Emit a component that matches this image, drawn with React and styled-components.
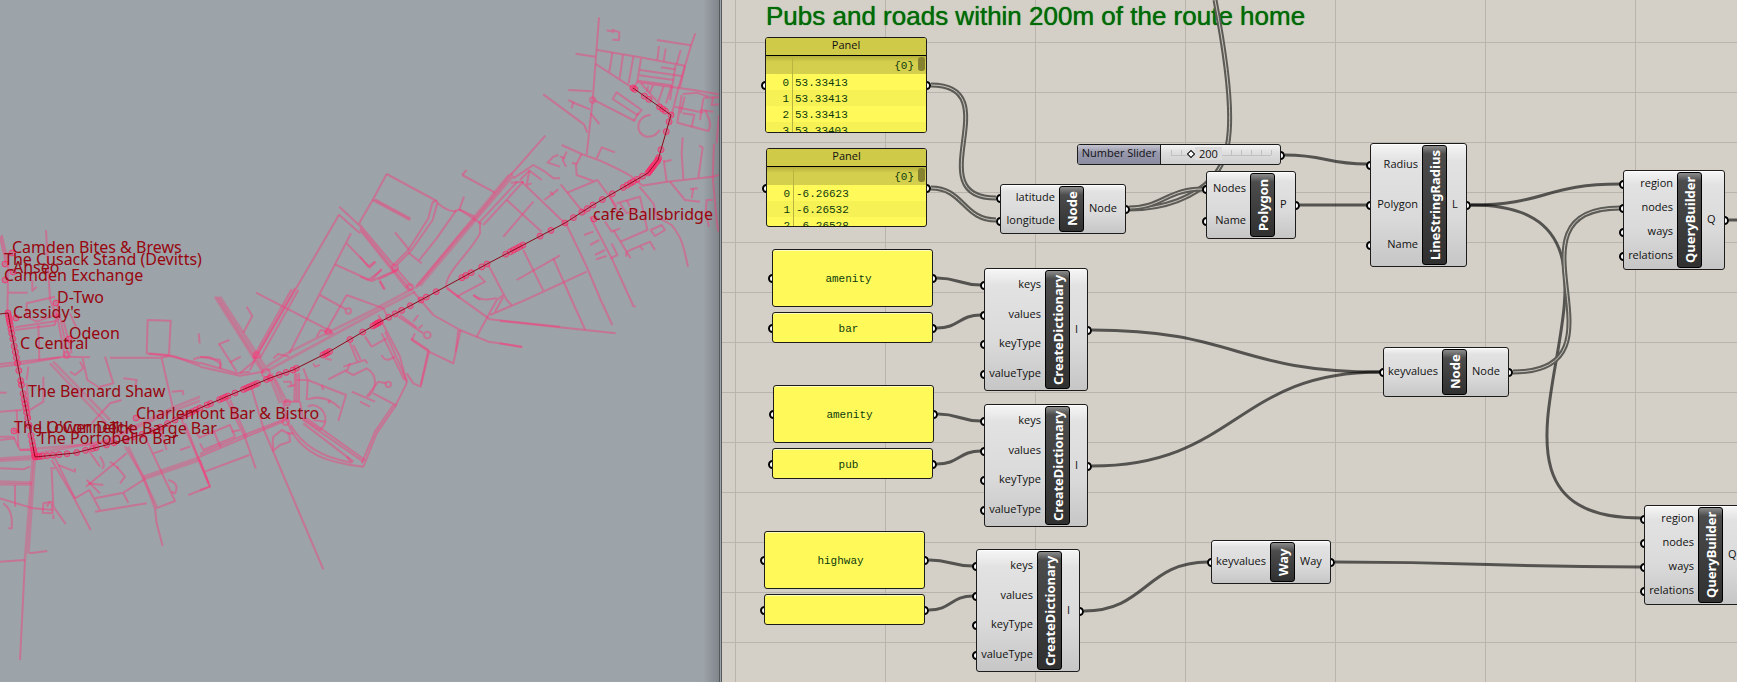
import React from "react";
import styled, { createGlobalStyle } from "styled-components";

const GlobalStyle = createGlobalStyle`
  * { box-sizing: border-box; }
  body { margin: 0; background: #d4d0c8; }
`;

const ui = `"Open Sans", "Noto Sans", sans-serif`;
const label = `"Noto Sans", "Open Sans", sans-serif`;
const mono = `"Liberation Mono", monospace`;

const Workspace = styled.main`
  display: grid;
  grid-template-columns: minmax(0, 722fr) minmax(0, 1015fr);
  min-height: 100vh;
  overflow: hidden;
  font-family: ${ui};
`;

/* ---------- map viewport ---------- */

const MapView = styled.section`
  position: relative;
  overflow: hidden;
  background: linear-gradient(to left, #80868b, #9ca3a9 16px);
  border-right: 3px double #55595c;
`;

const MapDrawing = styled.svg`
  position: absolute;
  top: 0;
  left: 0;
  width: 722px;
  height: 682px;
`;

const Place = styled.span`
  position: absolute;
  left: ${(p) => p.$x}px;
  top: ${(p) => p.$y}px;
  transform: translateY(-50%);
  font-family: ${label};
  font-size: 16px;
  line-height: 20px;
  white-space: nowrap;
  color: #98060f;
`;

const places = [
  ["Camden Bites & Brews", 12, 247],
  ["The Cusack Stand (Devitts)", 4, 259],
  ["Anseo", 13, 267],
  ["Camden Exchange", 4, 275],
  ["D-Two", 57, 297],
  ["Cassidy's", 13, 312],
  ["Odeon", 69, 333],
  ["C Central", 20, 343],
  ["The Bernard Shaw", 28, 391],
  ["Charlemont Bar & Bistro", 136, 413],
  ["The Lower Deck", 14, 427],
  ["J O'Connell", 38, 427],
  ["The Barge Bar", 110, 428],
  ["The Portobello Bar", 38, 438],
  ["café Ballsbridge", 593, 214],
];

/* Each district is traced at three units to the pixel, from its own origin. */
const districts = [
  {
    name: "north-east",
    origin: [360, 0],
    streets: `M717 52L706 195 698 300 680 463M740 91L763 96M755 88L778 97 777 120 757 119M647 161L706 170
      M711 150L840 172 975 197M707 192L820 265M757 158L748 215M789 165L779 235M820 170L806 250M843 175L832 245 822 262
      M891 120L993 136M1006 100L992 140 955 265 935 345M897 138L892 180M917 146L911 183M962 150L950 192
      M840 210L965 228M838 226L940 240M834 242L935 256M903 202L945 208M947 195L930 300M975 197L960 262
      M832 247L1000 270 1077 283M843 250L905 320M865 258L860 275M880 255L868 280M911 258L895 305M935 256L918 310
      M625 270L695 274M550 283L672 373 682 398M625 300L650 312 690 328M640 305L635 325M692 340L718 372
      M698 298L825 363M770 277L845 330 832 345 758 297ZM822 362L835 340M872 345C830 345 820 400 860 410C885 412 890 400 900 390
      M968 282L1010 278 1045 290M965 285L952 368 1045 393C1055 375 1050 360 1035 330M945 320L1030 338M1030 295L1020 360
      M1020 330L1060 335M968 340L1003 345 995 380M1030 293L1077 292M1060 290L1055 315 1077 313M974 290L962 340
      M1077 345L1070 430M605 435L665 462 720 482C760 500 800 520 815 530L845 555M665 462L648 495 650 525 700 543
      M710 475L725 442 765 457M620 455L608 480 618 500M595 465L580 470 563 488 600 500M600 470L615 475M636 488L650 492
      M845 557L922 545 1058 530 1077 525M911 480L920 545M911 485L935 480M968 412L965 460 970 537M1017 437L1028 443 1015 532
      M1062 432L1058 530 1070 660 1075 695M930 545L975 600 1020 605M1000 565L995 595M990 568L1013 565M1058 600L1040 600 1037 640 1047 680
      M838 560L880 610 890 650 935 675C970 720 970 740 984 800M556 407L452 525M307 525L320 510M307 525L405 578
      M312 590L298 628 345 650M298 628L365 672M80 522L38 600M80 522L230 603M38 600L150 660M45 598L152 656M38 600L0 665
      M218 605L205 655 145 750 100 795M233 605L218 660 155 750 110 795M218 605L233 603M233 610Q270 640 290 632
      M300 628L288 632 230 715 178 780M105 697L148 750M145 758L185 790M0 675L155 860M0 690L140 865M0 683L150 868
      M0 770L25 800 45 785M65 810L25 840 0 830M55 838L110 812M60 843L72 868
      M485 545L620 675 680 800 722 900M440 600L545 695M430 710L520 605M460 535L520 495 555 515 580 535 600 535
      M480 540L508 512 545 540M508 512L500 555 515 550M553 600L595 568M570 575L580 585M602 553L622 578 660 625 680 640
      M622 578L712 540 770 620M472 545L355 670M490 545L370 675M452 548L490 545M360 670L360 700C330 760 260 810 258 860L300 895
      M750 590L775 640M735 665L755 695 780 685M770 610L840 590 862 690 782 725M690 650L755 775 812 900
      M672 705L700 695M690 735L718 720M705 765L735 750M708 778L740 768M752 775L772 765 755 730M760 690L800 755 870 725 885 750
      M800 755L812 775M800 755L798 770M840 740L850 750M872 690L905 675 915 690 885 708ZM780 610L800 640 830 630M800 600L810 620
      M490 750L550 872M470 840L600 766M580 775L635 900M500 898L680 815M385 795L440 900M355 825L375 845 290 890M340 885L360 900`,
    avenues: `M456 520L350 650 300 705 165 865M448 524L345 648 170 860M460 527L340 668 180 858`,
    rings: [[698, 300, 8], [105, 803, 9], [150, 862, 9]],
  },
  {
    name: "south-east",
    origin: [500, 180],
    streets: `M302 360L337 435M392 360L400 378 407 380M215 360L255 448M0 423L347 460M0 490L66 502M20 360L35 375`,
    avenues: "",
    rings: [],
  },
  {
    name: "centre",
    origin: [200, 200],
    streets: `M480 65L478 72M418 20L480 78M418 45L480 100M418 43L160 485 120 520M453 100L360 280 268 460M440 130L510 203 527 185
      M405 193L515 243 590 210M545 207L515 240M538 242L555 268M360 285L438 328M440 285L375 400M440 285L550 325 560 345
      M168 278L395 395M350 410L362 390 400 400M285 265L165 475M275 268L158 475M295 270L180 475M0 488L110 520 150 515M0 500L120 527 190 515
      M150 510L165 480M140 320L157 348 130 398M55 433L88 420M58 433L110 515M90 487L122 470M0 470L60 480 62 505
      M220 475L235 462 268 470M285 520L283 605M297 520L297 605M290 520L290 605M250 545L272 545 275 560M262 560L285 555
      M310 505L323 540 320 600M323 540L438 585 415 662M323 598Q375 580 420 625M290 540L320 540M385 610L390 600M365 555L370 570
      M250 610L262 665C300 770 400 790 490 800M272 675C310 745 380 775 455 788L440 770M250 605L297 605M300 605L310 660 490 785M310 670L460 785M320 655L495 780
      M323 620C360 600 400 660 360 690L310 655M340 660L375 665M490 800L530 700 585 620 620 550 600 470 535 345M485 790L525 695 580 615
      M545 400L613 540M555 395L622 545M0 770L135 712 260 660M0 762L130 706 260 655M80 600L135 712 167 805M90 600L140 710M155 565L192 690 370 1108
      M0 712L90 675 105 710 10 750 0 730M40 690L62 742M95 695L120 690M15 815L148 765M0 780L30 860 0 870
      M220 752L240 735 270 725 268 702 245 690 220 710 218 725ZM262 700L280 700M450 430L472 485M460 435L482 480M385 538L440 510M430 500L495 480 503 490
      M450 490L440 515 460 525 500 505C535 525 530 565 505 590M455 575L525 605M480 605L510 620M520 580L590 617M500 590L515 570 535 545 558 550
      M495 410L515 440 560 415M545 465Q555 490 585 470M620 520L640 550 662 560 687 455 635 420 645 400M633 415L685 450 662 555M687 455L760 490 782 390M775 390L767 455
      M595 350L670 400M600 345L650 382M640 365L655 345M655 385L668 375M640 275L700 345 780 390 865 425 967 440M740 265L870 358 1080 380M830 410L890 300 910 285
      M870 345L980 298M820 285Q840 305 890 295M885 335L910 290M340 490L345 500 360 495M375 475L395 480`,
    avenues: `M640 265L520 330 390 395 270 455 200 500M645 275L530 335 400 405 205 510M45 290L190 520M60 290L205 515M52 290L197 520
      M205 520L240 610M215 520L250 610M222 530L262 610`,
    rings: [[445, 333, 8], [565, 553, 8], [682, 405, 10], [170, 465, 9], [385, 395, 8], [198, 520, 12], [257, 665, 10], [262, 608, 8]],
  },
  {
    name: "west",
    origin: [0, 220],
    streets: `M5 45L25 130 22 280M0 50L18 130M138 30L150 240 175 300M25 218L83 218M97 180L97 212 110 200M80 290L80 250 165 230M80 290L110 305 180 280
      M45 330L165 315M45 322L170 303M165 315L175 250M115 315L118 420M170 280L195 410M178 280L205 410M190 300L215 400M210 280L228 320
      M0 440L80 430 190 410 270 412M0 432L180 412M85 440L80 480M330 413L480 413 510 408 600 430M445 402L520 408 600 438M443 300L512 302 507 405 440 400Z
      M315 410L340 490 300 500M248 415L262 480 310 510M210 455L225 465 250 445 240 425M370 475L410 480 405 500M275 610L330 550 365 540
      M580 418Q600 408 630 412L662 430 660 445M596 340L599 370M485 415L518 560M515 515L548 512 550 525M130 470L130 545 90 570
      M0 575L65 570M0 518L20 518M50 570L55 680M0 650L40 650 60 690M40 630L60 640M0 660L45 655M80 490L90 600M60 690L110 690
      M0 1025L75 1020M88 1000L142 993M0 745L70 748 90 740M0 835L100 865 160 870M10 850Q40 870 35 925L25 925M45 795L45 860
      M130 850L155 845 158 880 128 878ZM140 860L150 845M160 885L160 897M155 750L160 860 197 912M155 720L220 830 272 930M165 715L225 835
      M150 745L165 745M225 835L268 810 300 870M175 735L225 755 225 745M258 800L380 700M300 710Q320 740 305 745M265 690L300 740M260 780L300 820
      M285 835L370 818 430 780M285 875L440 850M370 820L385 848M350 740L375 770 360 790M265 790L310 795M355 745L330 725
      M467 865L525 843 430 640M505 780Q540 790 525 820L515 815M630 800L565 825M480 620L500 690M590 640L600 655M460 700L490 690
      M545 600L630 800M555 610L625 790M540 690L570 680`,
    avenues: `M104 720L85 1000 M98 720L75 1020M150 430L320 610M160 425L330 600M0 716L110 708M0 722L110 716M0 785L95 788M0 793L95 793
      M60 690L300 670 525 560 600 530M110 700L330 660 525 570 600 542M375 680L430 770 465 865M385 680L470 860M430 770L600 712M430 778L600 720`,
    tails: `M75 1020L60 1320M465 865L470 910 488 978`,
    rings: [[200, 405, 9]],
  },
];

const route = [
  [633, 88], [671, 115], [658, 160], [648, 173], [593, 205], [565, 223], [487, 264], [421, 300],
  [378, 323], [327, 353], [293, 370], [270, 378], [200, 408], [150, 432], [110, 444], [75, 453], [35, 457], [8, 313], [0, 314],
];

/* Fractions of each leg of the route that carry a map node. */
const nodesOnLeg = [
  [0, 0.05, 0.3, 0.42, 0.7, 0.78, 0.85, 1],
  [0.15, 0.37, 0.77, 0.95, 1],
  [0.1, 0.25, 0.4, 0.5, 0.6, 0.7, 0.8, 0.9, 1],
  [0.1, 0.2, 0.27, 0.32, 0.38, 0.45, 0.65, 0.83, 1],
  [0.2, 0.4, 0.7, 1],
  [0.18, 0.32, 0.54, 0.58, 0.62, 0.66, 0.7, 0.76, 1],
  [0.08, 0.24, 0.32, 0.38, 0.77, 0.92],
  [0, 0.25, 0.45, 0.6, 0.75, 0.95, 1],
  [0, 0.03, 0.06, 0.1, 0.3, 0.55, 0.95],
  [0, 0.05, 0.12, 0.9, 1],
  [0.3, 0.6, 1],
  [0.05, 0.18, 0.22, 0.26, 0.3, 0.34, 0.38, 0.5, 0.6, 0.64, 0.68, 0.72, 0.85, 0.9, 1],
  [0.08, 0.16, 0.24, 0.35, 0.5, 0.65, 0.8, 0.95],
  [0.2, 0.4, 0.6, 0.9],
  [0.1, 0.4, 0.5, 0.7, 0.95],
  [0.2, 0.4, 0.55, 0.7, 0.82, 0.9, 0.95, 1],
  [0.01, 0.03, 0.05, 0.08, 0.11, 0.15, 0.22, 0.27, 0.31, 0.34, 0.37, 0.4, 0.44, 0.5, 0.53, 0.6, 0.65, 0.69, 0.73, 0.77, 0.82, 0.86, 0.89, 0.92, 0.94, 0.96, 0.98, 1],
];

const mapNodes = nodesOnLeg.flatMap((stops, leg) => {
  const [ax, ay] = route[leg];
  const [bx, by] = route[leg + 1];
  return stops.map((t) => [ax + (bx - ax) * t, ay + (by - ay) * t]);
});

const pubs = [[5, 264], [12, 253], [5, 280], [13, 272], [56, 303], [14, 431], [594, 219], [16, 318], [69, 339], [136, 418]];

function StreetMap() {
  return (
    <MapDrawing aria-hidden="true">
      <g fill="none" stroke="#fb3a78" strokeOpacity="0.44" strokeWidth="6" strokeLinejoin="round">
        {districts.map((d) => (
          <g key={d.name} transform={`translate(${d.origin.join(" ")}) scale(${1 / 3})`}>
            {(d.streets + (d.tails || "")).split("M").filter((s) => s.trim()).map((s, i) => (
              <path key={i} d={"M" + s} />
            ))}
            {d.avenues.split("M").filter((s) => s.trim()).map((s, i) => (
              <path key={i} d={"M" + s} strokeWidth="8" strokeOpacity="0.34" />
            ))}
            {d.rings.map(([x, y, r]) => (
              <circle key={`${x}-${y}`} cx={x} cy={y} r={r} />
            ))}
          </g>
        ))}
      </g>
      <g fill="#ff2f70" fillOpacity="0.35" stroke="#ff2467" strokeOpacity="0.7">
        {[...mapNodes, ...pubs].map(([x, y], i) => (
          <circle key={i} cx={x} cy={y} r="3" />
        ))}
      </g>
      <polyline points={route.join(" ")} fill="none" stroke="#8c0a18" />
    </MapDrawing>
  );
}

/* ---------- node canvas ---------- */

const Canvas = styled.section`
  position: relative;
  overflow: hidden;
  background-color: #d4d0c8;
  background-image: linear-gradient(to right, #b9b5ae 1px, transparent 1px),
    linear-gradient(to bottom, #b9b5ae 1px, transparent 1px);
  background-size: 150px 100%, 100% 50px;
  background-position: 13px 0, 0 42px;
`;

const Title = styled.h1`
  position: absolute;
  top: 0;
  left: 44px;
  margin: 0;
  font: 400 26px/32px "Liberation Sans", Arial, sans-serif;
  color: #006a06;
  text-shadow: 0 0 1px #006a06;
  white-space: nowrap;
`;

const Wires = styled.svg`
  position: absolute;
  top: 0;
  left: 0;
  width: 1040px;
  height: 682px;
  pointer-events: none;
`;

const Block = styled.article`
  position: absolute;
  left: ${(p) => p.$x}px;
  top: ${(p) => p.$y}px;
  width: ${(p) => p.$w}px;
  height: ${(p) => p.$h}px;
`;

const Port = styled.i`
  position: absolute;
  top: 50%;
  ${(p) => p.$side}: -4px;
  width: 9px;
  height: 9px;
  margin-top: -4px;
  border: 2px solid #000;
  border-radius: 50%;
  background: #fff;
  z-index: -1;
`;

const Frame = styled.div`
  position: relative;
  width: 100%;
  height: 100%;
  isolation: isolate;
`;

const Shell = styled.div`
  position: relative;
  height: 100%;
  display: grid;
  grid-template-columns: minmax(0, 1fr) 25px ${(p) => p.$out}px;
  grid-template-rows: minmax(0, 1fr);
  padding: 2px 0;
`;

const Face = styled.div`
  position: absolute;
  inset: 0;
  z-index: -1;
  border: 1px solid #1c1c1c;
  border-radius: 3px;
  background: linear-gradient(#f6f6f6, #e2e2e2 14%, #dadada 60%, #c6c6c6);
  box-shadow: inset 0 1px #fff;
`;

const Inputs = styled.ul`
  display: grid;
  grid-auto-rows: 1fr;
  margin: 0;
  padding: 0;
  list-style: none;
`;

const Input = styled.li`
  position: relative;
  display: flex;
  align-items: center;
  justify-content: flex-end;
  padding: 0 4px 2px 0;
  font-size: 11px;
  line-height: 16px;
  color: #111;
  white-space: nowrap;
`;

const NamePlate = styled.h2`
  display: flex;
  align-items: center;
  justify-content: center;
  margin: 0;
  border: 1px solid #000;
  border-radius: 3px;
  background: linear-gradient(to top, #8c8c8c, #4c4c4c 8px, #303030);
  color: #fff;
  font-family: ${label};
  font-size: 13px;
  font-weight: 700;
  line-height: 20px;
  white-space: nowrap;
  writing-mode: vertical-rl;
  rotate: 180deg;
`;

const Output = styled.div`
  position: relative;
  display: flex;
  align-items: center;
  padding: 0 0 2px 5px;
  font-size: 11px;
  line-height: 16px;
  color: #111;
`;

function Component({ x, y, w, h, out, name, inputs, output }) {
  return (
    <Block $x={x} $y={y} $w={w} $h={h}>
      <Frame>
        <Shell $out={out}>
          <Inputs>
            {inputs.map((text) => (
              <Input key={text}>
                <Port $side="left" />
                {text}
              </Input>
            ))}
          </Inputs>
          <NamePlate>{name}</NamePlate>
          <Output>
            {output}
            <Port $side="right" />
          </Output>
        </Shell>
        <Face />
      </Frame>
    </Block>
  );
}

const Note = styled.div`
  position: absolute;
  inset: 0;
  overflow: hidden;
  border: 1px solid #1c1c1c;
  border-radius: 3px;
  background: #fffa5a;
  box-shadow: inset 0 1px #fffcc0;
  color: #0c3a0c;
  font-family: ${mono};
`;

const NoteText = styled.p`
  display: grid;
  place-items: center;
  height: 100%;
  margin: 0;
  padding: 2px 8px 0 0;
  font-size: 11px;
  line-height: 16px;
`;

const Caption = styled.h2`
  height: 18px;
  margin: 0;
  border-bottom: 1px solid #000;
  background: #cfca48;
  color: #111;
  text-align: center;
  font: 400 11px/14px ${ui};
`;

const Path = styled.div`
  height: 18px;
  padding-right: 12px;
  background: linear-gradient(#b5b03c, #d4cf4c 6px);
  text-align: right;
  font-size: 11px;
  line-height: 20px;
`;

const Thumb = styled.span`
  position: absolute;
  top: 19px;
  right: 1px;
  width: 7px;
  height: 14px;
  border-radius: 3px;
  background: #86822f;
`;

const Gutter = styled.span`
  position: absolute;
  top: 18px;
  bottom: 0;
  left: 26px;
  width: 1px;
  background: #b9b440;
`;

const Values = styled.table`
  width: 100%;
  border-collapse: collapse;
  font-size: 11px;
  line-height: 14px;

  tr:nth-child(even) { background: #f6f155; }
  th, td { height: 16px; padding: 2px 0 0 3px; font-weight: 400; }
  th { width: 26px; padding-right: 3px; text-align: right; }
`;

function Panel({ x, y, w = 161, h, text, values }) {
  return (
    <Block $x={x} $y={y} $w={w} $h={h}>
      <Frame>
        <Port $side="left" />
        <Port $side="right" />
        <Note>
          {values ? (
            <>
              <Caption>Panel</Caption>
              <Path>{"{0}"}</Path>
              <Values>
                <tbody>
                  {values.map((value, i) => (
                    <tr key={i}>
                      <th scope="row">{i}</th>
                      <td>{value}</td>
                    </tr>
                  ))}
                </tbody>
              </Values>
              <Gutter />
              <Thumb />
            </>
          ) : (
            <NoteText>{text}</NoteText>
          )}
        </Note>
      </Frame>
    </Block>
  );
}

const SliderFace = styled.div`
  display: flex;
  height: 100%;
  overflow: hidden;
  border: 1px solid #1c1c1c;
  border-radius: 3px;
  background: linear-gradient(#f4f4f4, #dedede 40%, #cfcfcf);
`;

const SliderLabel = styled.label`
  width: 83px;
  border-right: 1px solid #1c1c1c;
  background: linear-gradient(#c4c4d0, #9898ac 40%, #8c8ca2);
  color: #111;
  text-align: center;
  font-size: 11px;
  line-height: 16px;
`;

const SliderTrack = styled.div`
  position: relative;
  flex: 1;
  padding: 0 8px;
`;

const Range = styled.input`
  appearance: none;
  display: block;
  width: 100%;
  height: 18px;
  margin: 0;
  background: linear-gradient(#c0c0c0, #c0c0c0) 2px 10px / 100px 1px no-repeat,
    repeating-linear-gradient(to right, #c0c0c0 0 1px, transparent 1px 10px) 2px 5px / 101px 5px no-repeat;

  &::-webkit-slider-thumb {
    appearance: none;
    width: 6px;
    height: 6px;
    border: 1px solid #000;
    background: #fff;
    rotate: 45deg;
  }
`;

const Reading = styled.output`
  position: absolute;
  left: 34px;
  top: 2px;
  padding: 0 4px;
  background: #dcdcdc;
  color: #111;
  font-size: 11px;
  line-height: 13px;
`;

function NumberSlider() {
  return (
    <Block $x={355} $y={144} $w={204} $h={21}>
      <Frame>
        <Port $side="right" />
        <SliderFace>
          <SliderLabel htmlFor="radius">Number Slider</SliderLabel>
          <SliderTrack>
            <Range id="radius" type="range" min="0" max="1000" defaultValue="200" />
            <Reading htmlFor="radius">200</Reading>
          </SliderTrack>
        </SliderFace>
      </Frame>
    </Block>
  );
}

const wire = (x1, y1, x2, y2, pull = (x2 - x1) / 2) =>
  `M${x1} ${y1}C${x1 + pull} ${y1} ${x2 - pull} ${y2} ${x2} ${y2}`;

const singleWires = [
  wire(563, 155, 645, 164),
  wire(578, 205, 645, 205),
  wire(749, 205, 898, 184),
  wire(749, 205, 919, 518, 225),
  wire(370, 330, 658, 372),
  wire(370, 466, 658, 372),
  wire(362, 611, 486, 562),
  wire(613, 562, 919, 567),
  wire(1007, 220, 1040, 220),
  wire(215, 278, 259, 285),
  wire(215, 328, 259, 315),
  wire(216, 414, 259, 421),
  wire(215, 464, 259, 451),
  wire(207, 560, 251, 566),
  wire(207, 610, 251, 596),
];

const doubleWires = [
  wire(209, 85, 274, 198, 80),
  wire(209, 188, 274, 220),
  wire(791, 372, 898, 208, 126),
  "M407 209C443 209 473 197 490 178S518 130 493 0",
  "M407 208C440 208 445 189 481 189",
];

const dictionaryInputs = ["keys", "values", "keyType", "valueType"];
const queryInputs = ["region", "nodes", "ways", "relations"];

const components = [
  { x: 278, y: 184, w: 126, h: 50, out: 42, name: "Node", inputs: ["latitude", "longitude"], output: "Node" },
  { x: 484, y: 171, w: 90, h: 68, out: 21, name: "Polygon", inputs: ["Nodes", "Name"], output: "P" },
  { x: 648, y: 143, w: 97, h: 124, out: 20, name: "LineStringRadius", inputs: ["Radius", "Polygon", "Name"], output: "L" },
  { x: 901, y: 170, w: 102, h: 100, out: 23, name: "QueryBuilder", inputs: queryInputs, output: "Q" },
  { x: 262, y: 268, w: 104, h: 123, out: 18, name: "CreateDictionary", inputs: dictionaryInputs, output: "I" },
  { x: 262, y: 404, w: 104, h: 123, out: 18, name: "CreateDictionary", inputs: dictionaryInputs, output: "I" },
  { x: 254, y: 549, w: 104, h: 123, out: 18, name: "CreateDictionary", inputs: dictionaryInputs, output: "I" },
  { x: 661, y: 347, w: 126, h: 50, out: 42, name: "Node", inputs: ["keyvalues"], output: "Node" },
  { x: 489, y: 540, w: 120, h: 44, out: 36, name: "Way", inputs: ["keyvalues"], output: "Way" },
  { x: 922, y: 505, w: 102, h: 100, out: 23, name: "QueryBuilder", inputs: queryInputs, output: "Q" },
];

const panels = [
  { x: 43, y: 37, w: 162, h: 96, values: ["53.33413", "53.33413", "53.33413", "53.33403"] },
  { x: 44, y: 148, h: 79, values: ["-6.26623", "-6.26532", "-6.26528"] },
  { x: 50, y: 249, h: 58, text: "amenity" },
  { x: 50, y: 312, h: 31, text: "bar" },
  { x: 51, y: 385, h: 58, text: "amenity" },
  { x: 50, y: 448, h: 31, text: "pub" },
  { x: 42, y: 531, h: 58, text: "highway" },
  { x: 42, y: 594, h: 31, text: "" },
];

export default function App() {
  return (
    <>
      <GlobalStyle />
      <Workspace>
        <MapView aria-label="Street map">
          <StreetMap />
          {places.map(([name, x, y]) => (
            <Place key={name} $x={x} $y={y}>{name}</Place>
          ))}
        </MapView>
        <Canvas aria-label="Definition">
          <Title>Pubs and roads within 200m of the route home</Title>
          <Wires aria-hidden="true">
            <g fill="none" stroke="#000" strokeOpacity="0.6" strokeWidth="3">
              {singleWires.map((d) => <path key={d} d={d} />)}
            </g>
            {doubleWires.map((d) => (
              <g key={d} fill="none">
                <path d={d} stroke="#5c5b55" strokeWidth="5" />
                <path d={d} stroke="#c8c5be" strokeWidth="1" />
              </g>
            ))}
          </Wires>
          {panels.map((panel) => <Panel key={`${panel.x}-${panel.y}`} {...panel} />)}
          {components.map((item) => <Component key={`${item.x}-${item.y}`} {...item} />)}
          <NumberSlider />
        </Canvas>
      </Workspace>
    </>
  );
}
